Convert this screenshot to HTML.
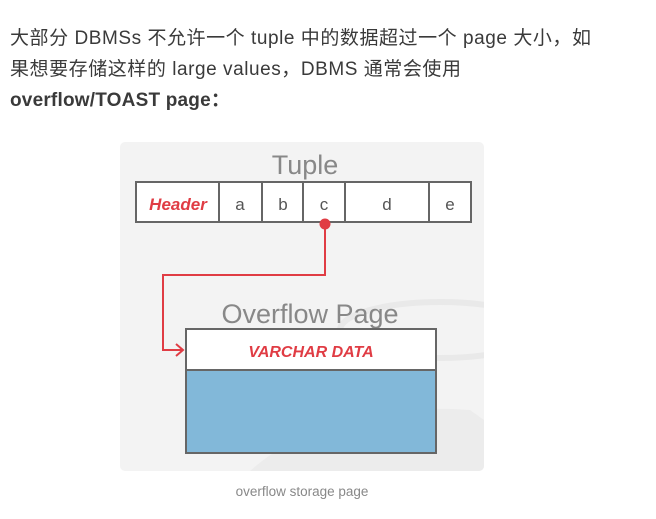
<!DOCTYPE html>
<html><head><meta charset="utf-8"><style>
body{margin:0;background:#fff;width:656px;height:519px;overflow:hidden;position:relative;font-family:"Liberation Sans","Noto Sans CJK SC",sans-serif;}
.p{position:absolute;left:10px;top:23px;width:640px;font-size:19px;letter-spacing:0.55px;line-height:31px;color:#3a3a3a;}
.cap{position:absolute;left:0;width:604px;top:484px;text-align:center;font-size:13.5px;color:#888;}
svg{position:absolute;left:0;top:0}
</style></head><body>
<div class="p">大部分 DBMSs 不允许一个 tuple 中的数据超过一个 page 大小，如<br>果想要存储这样的 large values，DBMS 通常会使用<br><b style="letter-spacing:0.2px">overflow/TOAST page：</b></div>
<svg width="656" height="519" font-family="Liberation Sans, sans-serif">
<defs><clipPath id="c"><rect x="120" y="142" width="364" height="329" rx="5"/></clipPath></defs>
<rect x="120" y="142" width="364" height="329" rx="5" fill="#f3f3f3"/>
<g clip-path="url(#c)">
<path d="M250 471 Q330 400 470 410 L484 420 L484 471 Z" fill="#ececec"/>
<ellipse cx="440" cy="330" rx="100" ry="28" fill="none" stroke="#e9e9e9" stroke-width="6"/>
</g>
<text x="305" y="174" font-size="27" fill="#888" text-anchor="middle">Tuple</text>
<rect x="136" y="182" width="335" height="40" fill="#fff" stroke="#666" stroke-width="2"/>
<g stroke="#666" stroke-width="2"><line x1="219" y1="182" x2="219" y2="222"/><line x1="262" y1="182" x2="262" y2="222"/><line x1="303" y1="182" x2="303" y2="222"/><line x1="345" y1="182" x2="345" y2="222"/><line x1="429" y1="182" x2="429" y2="222"/></g>
<text x="178" y="210" font-size="17" font-weight="bold" font-style="italic" fill="#e03c44" text-anchor="middle">Header</text>
<g font-size="17" fill="#555" text-anchor="middle"><text x="240" y="210">a</text><text x="283" y="210">b</text><text x="324" y="210">c</text><text x="387" y="210">d</text><text x="450" y="210">e</text></g>
<text x="310" y="323" font-size="27" fill="#888" text-anchor="middle">Overflow Page</text>
<rect x="186" y="329" width="250" height="124" fill="#82b8d9" stroke="#666" stroke-width="2"/>
<rect x="186" y="329" width="250" height="41" fill="#fff" stroke="#666" stroke-width="2"/>
<text x="311" y="357" font-size="16" font-weight="bold" font-style="italic" fill="#e03c44" text-anchor="middle">VARCHAR DATA</text>
<path d="M325 224 V275 H163 V350 H183" fill="none" stroke="#e03c44" stroke-width="2"/>
<path d="M176 344 L183 350 L176 356" fill="none" stroke="#e03c44" stroke-width="2"/>
<circle cx="325" cy="224" r="5.5" fill="#e03c44"/>
</svg>
<div class="cap">overflow storage page</div>
</body></html>
